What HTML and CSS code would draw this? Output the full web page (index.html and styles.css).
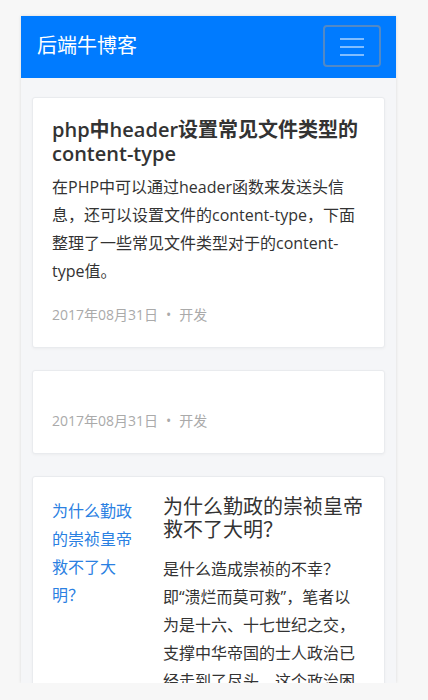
FILE: index.html
```html
<!DOCTYPE html>
<html lang="zh-CN">
<head>
<meta charset="utf-8">
<title>后端牛博客</title>
<link rel="stylesheet" href="styles.css">
</head>
<body>
<div class="frame">
  <header class="navbar">
    <a class="brand" href="#">后端牛博客</a>
    <button class="toggler" type="button" aria-label="菜单">
      <svg width="24" height="20" viewBox="0 0 24 20" aria-hidden="true">
        <path d="M0 3h24M0 11h24M0 19h24" stroke="rgba(255,255,255,0.5)" stroke-width="2"/>
      </svg>
    </button>
  </header>
  <main class="main">
    <article class="card">
      <h2 class="card-title">php中header设置常见文件类型的content-type</h2>
      <p class="card-text">在PHP中可以通过header函数来发送头信息，还可以设置文件的content-type，下面整理了一些常见文件类型对于的content-type值。</p>
      <div class="meta">2017年08月31日<span class="dot">•</span>开发</div>
    </article>
    <article class="card">
      <p class="card-text empty"></p>
      <div class="meta">2017年08月31日<span class="dot">•</span>开发</div>
    </article>
    <article class="card card-split">
      <a class="side-link" href="#">为什么勤政的崇祯皇帝救不了大明？</a>
      <div class="split-body">
        <h2 class="split-title">为什么勤政的崇祯皇帝救不了大明？</h2>
        <p class="card-text">是什么造成崇祯的不幸？<span class="nw">即“溃</span>烂而莫可救”，笔者以为是十六、十七世纪之交，支撑中华帝国的士人政治已经走到了尽头，这个政治困境无法依靠个人的勤政来解决。</p>
      </div>
    </article>
  </main>
</div>
</body>
</html>
```
FILE: styles.css
```css
* { box-sizing: border-box; }
html, body { margin: 0; padding: 0; }
body {
  background: #f7f7f7;
  font-family: "Open Sans", "Noto Sans CJK SC", sans-serif;
  color: #333;
  text-spacing-trim: space-all;
}
.frame {
  width: 375px;
  height: 667px;
  margin: 16px 0 0 21px;
  overflow: hidden;
  background: #f5f6f8;
  box-shadow: 0 0 3px rgba(0,0,0,0.12);
}
.navbar {
  height: 62px;
  background: #007bff;
  display: flex;
  align-items: center;
  justify-content: space-between;
  padding: 0 15px 2px 16px;
}
.brand {
  color: #fff;
  font-size: 20px;
  line-height: 30px;
  text-decoration: none;
}
.toggler {
  width: 58px;
  height: 42px;
  border: 2px solid rgba(150,150,150,0.55);
  border-radius: 4px;
  background: transparent;
  display: flex;
  align-items: center;
  justify-content: center;
  padding: 0;
}
.toggler svg { display: block; }
.main {
  padding: 19px 11px 0 11px;
}
.card {
  background: #fff;
  border: 1px solid #e9ebee;
  border-radius: 3px;
  box-shadow: 0 1px 3px rgba(0,0,0,0.04);
  padding: 20px 19px 22px;
  margin-bottom: 22px;
}
.card-title {
  margin: 0 0 7px;
  font-size: 20px;
  line-height: 24px;
  font-weight: 600;
  color: #333;
}
.card-text {
  margin: 0 0 19px;
  font-size: 16px;
  line-height: 28px;
  color: #333;
}
.meta {
  font-size: 14px;
  line-height: 21px;
  color: #aaa;
}
.dot { margin: 0 8px; }
.nw { white-space: nowrap; }
.card-split {
  display: grid;
  grid-template-columns: 91px 1fr;
  column-gap: 20px;
  align-items: start;
}
.side-link {
  color: #2a80e2;
  font-size: 16px;
  line-height: 28px;
  text-decoration: none;
}
.split-title {
  margin: -2px 0 14px;
  font-size: 20px;
  line-height: 23px;
  font-weight: normal;
  color: #333;
}
```
